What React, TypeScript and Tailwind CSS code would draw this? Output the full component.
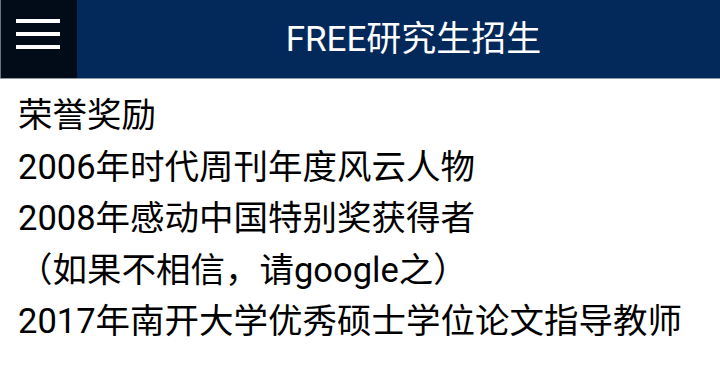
export default function App() {
  const lines = [
    "荣誉奖励",
    "2006年时代周刊年度风云人物",
    "2008年感动中国特别奖获得者",
    "（如果不相信，请google之）",
    "2017年南开大学优秀硕士学位论文指导教师",
  ];
  return (
    <div className="w-[720px] h-[373px] bg-white overflow-hidden" style={{ fontFamily: 'Roboto, "Noto Sans CJK SC", sans-serif' }}>
      <div className="flex h-[79px] border-b border-[#8c9aa8] bg-[#03285a]">
        <div className="w-[77px] h-full bg-[#020c18] border-l border-[#6b7280] flex flex-col gap-[9px] pt-[19px] pl-[15px]">
          <div className="w-[44px] h-[4px] bg-white"></div>
          <div className="w-[44px] h-[4px] bg-white"></div>
          <div className="w-[44px] h-[4px] bg-white"></div>
        </div>
        <div className="flex-1 flex items-center justify-center pl-[30px] text-white text-[35px] leading-none">
          FREE研究生招生
        </div>
      </div>
      <div className="pl-[18px] pt-[11px] text-[34.5px] leading-[51.5px] text-black">
        {lines.map((l) => (
          <div key={l} className="whitespace-nowrap">{l}</div>
        ))}
      </div>
    </div>
  );
}
